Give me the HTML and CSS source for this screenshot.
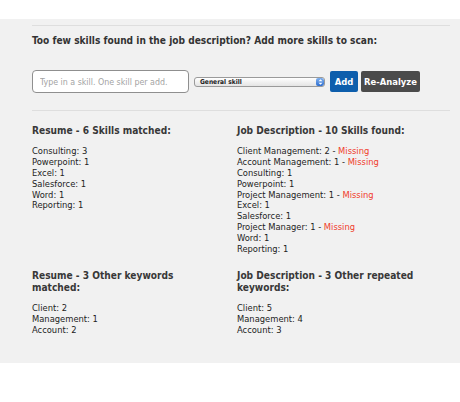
FILE: index.html
```html
<!DOCTYPE html>
<html>
<head>
<meta charset="utf-8">
<link rel="stylesheet" href="styles.css">
</head>
<body>
<div class="panel">
  <hr class="rule rule-top">
  <h2 class="lead">Too few skills found in the job description? Add more skills to scan:</h2>
  <div class="add-row">
    <input class="skill-input" type="text" placeholder="Type in a skill. One skill per add.">
    <div class="select">
      <span class="select-text">General skill</span>
      <span class="stepper">
        <svg width="7" height="8" viewBox="0 0 7 8"><path d="M1.5 3.2 L3.5 1.2 L5.5 3.2 Z M1.5 4.8 L3.5 6.8 L5.5 4.8 Z" fill="#fff"/></svg>
      </span>
    </div>
    <button class="btn btn-add">Add</button>
    <button class="btn btn-re">Re-Analyze</button>
  </div>
  <hr class="rule rule-mid">
  <div class="results">
    <section class="col">
      <h3 class="col-title">Resume - 6 Skills matched:</h3>
      <ul class="list">
        <li>Consulting: 3</li>
        <li>Powerpoint: 1</li>
        <li>Excel: 1</li>
        <li>Salesforce: 1</li>
        <li>Word: 1</li>
        <li>Reporting: 1</li>
      </ul>
    </section>
    <section class="col">
      <h3 class="col-title">Job Description - 10 Skills found:</h3>
      <ul class="list">
        <li>Client Management: 2 - <span class="missing">Missing</span></li>
        <li>Account Management: 1 - <span class="missing">Missing</span></li>
        <li>Consulting: 1</li>
        <li>Powerpoint: 1</li>
        <li>Project Management: 1 - <span class="missing">Missing</span></li>
        <li>Excel: 1</li>
        <li>Salesforce: 1</li>
        <li>Project Manager: 1 - <span class="missing">Missing</span></li>
        <li>Word: 1</li>
        <li>Reporting: 1</li>
      </ul>
    </section>
    <section class="col">
      <h3 class="col-title">Resume - 3 Other keywords matched:</h3>
      <ul class="list">
        <li>Client: 2</li>
        <li>Management: 1</li>
        <li>Account: 2</li>
      </ul>
    </section>
    <section class="col">
      <h3 class="col-title">Job Description - 3 Other repeated keywords:</h3>
      <ul class="list">
        <li>Client: 5</li>
        <li>Management: 4</li>
        <li>Account: 3</li>
      </ul>
    </section>
  </div>
</div>
</body>
</html>
```
FILE: styles.css
```css
html, body {
  margin: 0;
  padding: 0;
  background: #ffffff;
}
body {
  padding-top: 19px;
  font-family: "DejaVu Sans Condensed", "DejaVu Sans", sans-serif;
  color: #222;
}
.panel {
  background: #f1f1f1;
  padding: 6px 10px 27px 32px;
}
.rule {
  border: 0;
  border-top: 1px solid #dedede;
  margin: 0;
  height: 0;
}
.lead {
  margin: 9px 0 0;
  font-size: 10.1px;
  line-height: 12px;
  font-weight: bold;
  color: #333;
}
.add-row {
  display: flex;
  align-items: center;
  margin-top: 23px;
  height: 23px;
}
.skill-input {
  box-sizing: border-box;
  width: 157px;
  height: 23px;
  margin: 0;
  border: 1px solid #8f8f8f;
  border-radius: 4px;
  background: #fff;
  padding: 0 0 0 7px;
  font-family: "DejaVu Sans Condensed", "DejaVu Sans", sans-serif;
  font-size: 8.8px;
  color: #333;
  outline: none;
}
.skill-input::placeholder {
  color: #a3a3a3;
}
.select {
  box-sizing: border-box;
  display: flex;
  align-items: center;
  justify-content: space-between;
  width: 131px;
  height: 10px;
  margin-left: 5px;
  border: 1px solid #9a9a9a;
  border-radius: 3px;
  background: linear-gradient(#ffffff, #e4e4e4);
  padding-left: 5px;
  overflow: hidden;
}
.select-text {
  font-size: 6.6px;
  font-weight: bold;
  line-height: 8px;
  color: #222;
}
.stepper {
  display: flex;
  align-items: center;
  justify-content: center;
  width: 8px;
  height: 8px;
  border-radius: 2px;
  background: linear-gradient(#7fb0ee, #2f6fd0);
}
.stepper svg {
  display: block;
}
.btn {
  box-sizing: border-box;
  height: 21px;
  border: 0;
  border-radius: 2px;
  padding: 0;
  font-family: "DejaVu Sans Condensed", "DejaVu Sans", sans-serif;
  font-size: 9.4px;
  font-weight: bold;
  color: #fff;
}
.btn-add {
  width: 28px;
  margin-left: 5px;
  background: #0d5eac;
}
.btn-re {
  width: 59px;
  margin-left: 3px;
  background: #4b4b4b;
}
.rule-mid {
  margin-top: 17px;
}
.results {
  display: grid;
  grid-template-columns: 185px 1fr;
  column-gap: 20px;
  row-gap: 15px;
  margin-top: 14px;
}
.col-title {
  margin: 0;
  font-size: 10.1px;
  line-height: 12.6px;
  font-weight: bold;
  color: #383838;
}
.list {
  list-style: none;
  margin: 8.6px 0 0;
  padding: 0;
  font-size: 9.3px;
  line-height: 10.85px;
  color: #222;
}
.missing {
  color: #f03b2b;
}
```
